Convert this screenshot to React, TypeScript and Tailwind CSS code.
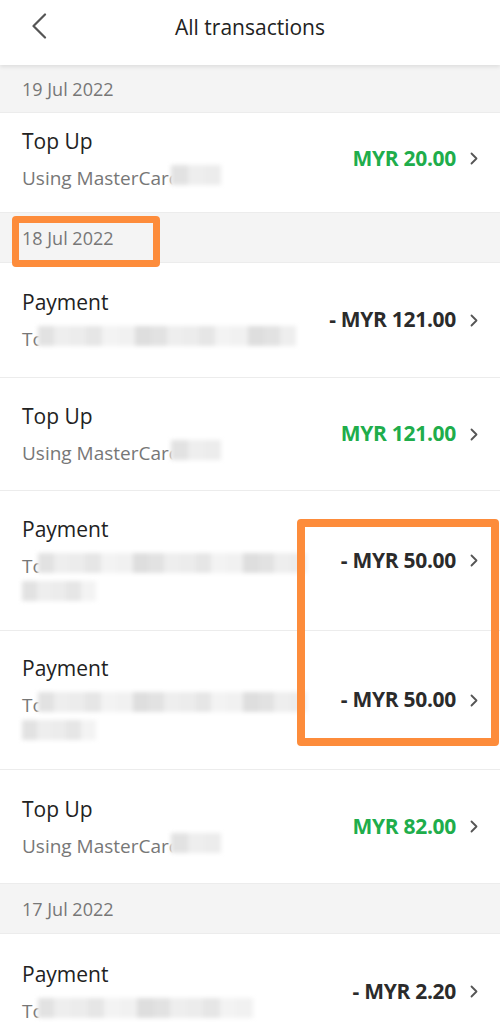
type Txn = {
  kind: "topup" | "payment";
  amount: string;
  height: string;
  lines?: 1 | 2;
  blur: number;
  lift?: boolean;
};

type Group = { date: string; dateH: string; items: Txn[] };

const groups: Group[] = [
  {
    date: "19 Jul 2022",
    dateH: "h-[48px]",
    items: [{ kind: "topup", amount: "MYR 20.00", height: "h-[100px]", blur: 50, lift: true }],
  },
  {
    date: "18 Jul 2022",
    dateH: "h-[50px]",
    items: [
      { kind: "payment", amount: "- MYR 121.00", height: "h-[115px]", blur: 258 },
      { kind: "topup", amount: "MYR 121.00", height: "h-[113px]", blur: 50 },
      { kind: "payment", amount: "- MYR 50.00", height: "h-[140px]", lines: 2, blur: 268 },
      { kind: "payment", amount: "- MYR 50.00", height: "h-[139px]", lines: 2, blur: 268 },
      { kind: "topup", amount: "MYR 82.00", height: "h-[114px]", blur: 50 },
    ],
  },
  {
    date: "17 Jul 2022",
    dateH: "h-[50px]",
    items: [{ kind: "payment", amount: "- MYR 2.20", height: "h-[116px]", blur: 215 }],
  },
];

// pixelated blur strip, like the redacted text in the screenshot
function Redacted({ width }: { width: number }) {
  const shades = ["#ececec", "#e2e2e2", "#f1f1f1", "#e6e6e6", "#eeeeee", "#dedede", "#f3f3f3"];
  const cells = Math.max(3, Math.round(width / 16));
  return (
    <span className="inline-flex h-[20px] blur-[2px]" style={{ width }}>
      {Array.from({ length: cells }, (_, i) => (
        <span key={i} className="h-full flex-1" style={{ background: shades[(i * 3 + 1) % shades.length] }} />
      ))}
    </span>
  );
}

function Chevron() {
  return (
    <svg width="8" height="13" viewBox="0 0 8 13" fill="none" className="ml-[14px] shrink-0">
      <path d="M1.5 1.5 6.5 6.5 1.5 11.5" stroke="#555" strokeWidth="1.8" strokeLinecap="round" strokeLinejoin="round" />
    </svg>
  );
}

function Row({ t }: { t: Txn }) {
  const isTopUp = t.kind === "topup";
  return (
    <div className={`flex items-center border-b border-[#ececec] bg-white pl-[22px] pr-[22px] ${t.height}`}>
      <div className={`flex min-w-0 flex-1 flex-col ${t.lift ? "-mt-[7px]" : ""}`}>
        <span className="text-[21px] leading-[28px] text-[#222]">{isTopUp ? "Top Up" : "Payment"}</span>
        <div className="mt-[10px] flex items-center text-[19px] leading-[26px] text-[#777]">
          <span>{isTopUp ? "Using MasterCard" : "To"}</span>
          <span className={`relative ${isTopUp ? "-ml-[9px]" : "-ml-[6px]"}`}>
            <span className="absolute inset-y-[-2px] left-0 w-[10px] bg-white blur-[1px]" />
            <Redacted width={t.blur} />
          </span>
        </div>
        {t.lines === 2 && (
          <div className="mt-[2px]">
            <Redacted width={74} />
          </div>
        )}
      </div>
      <span
        className={`shrink-0 text-[21px] font-bold tracking-[-0.3px] ${isTopUp ? "text-[#20ad4b]" : "text-[#2b2b2b]"} ${t.lift ? "-mt-[8px]" : ""}`}
      >
        {t.amount}
      </span>
      <span className={t.lift ? "-mt-[8px]" : ""}>
        <Chevron />
      </span>
    </div>
  );
}

export default function App() {
  return (
    <div className="relative h-[1036px] w-[500px] overflow-hidden bg-white font-['Open_Sans',sans-serif]">
      <header className="relative z-10 flex h-[65px] items-start justify-center bg-white pt-[13px] shadow-[0_2px_4px_rgba(0,0,0,0.09)]">
        <svg width="16" height="26" viewBox="0 0 16 26" fill="none" className="absolute left-[31px] top-[13px]">
          <path d="M14 1.5 2.5 13 14 24.5" stroke="#555" strokeWidth="2.2" strokeLinecap="round" strokeLinejoin="round" />
        </svg>
        <h1 className="text-[21px] leading-[28px] text-[#222]">All transactions</h1>
      </header>

      {groups.map((g) => (
        <section key={g.date}>
          <div className={`flex items-center border-b border-[#ececec] bg-[#f4f4f4] pl-[22px] pt-[2px] text-[18px] text-[#777] ${g.dateH}`}>
            {g.date}
          </div>
          {g.items.map((t, i) => (
            <Row key={i} t={t} />
          ))}
        </section>
      ))}

      {/* annotation boxes drawn over the screenshot */}
      <div className="absolute left-[12px] top-[216px] h-[51px] w-[148px] rounded-[4px] border-[7px] border-[#fd8c3b]" />
      <div className="absolute left-[297px] top-[519px] h-[227px] w-[202px] rounded-[4px] border-[8px] border-[#fd8c3b]" />
    </div>
  );
}
